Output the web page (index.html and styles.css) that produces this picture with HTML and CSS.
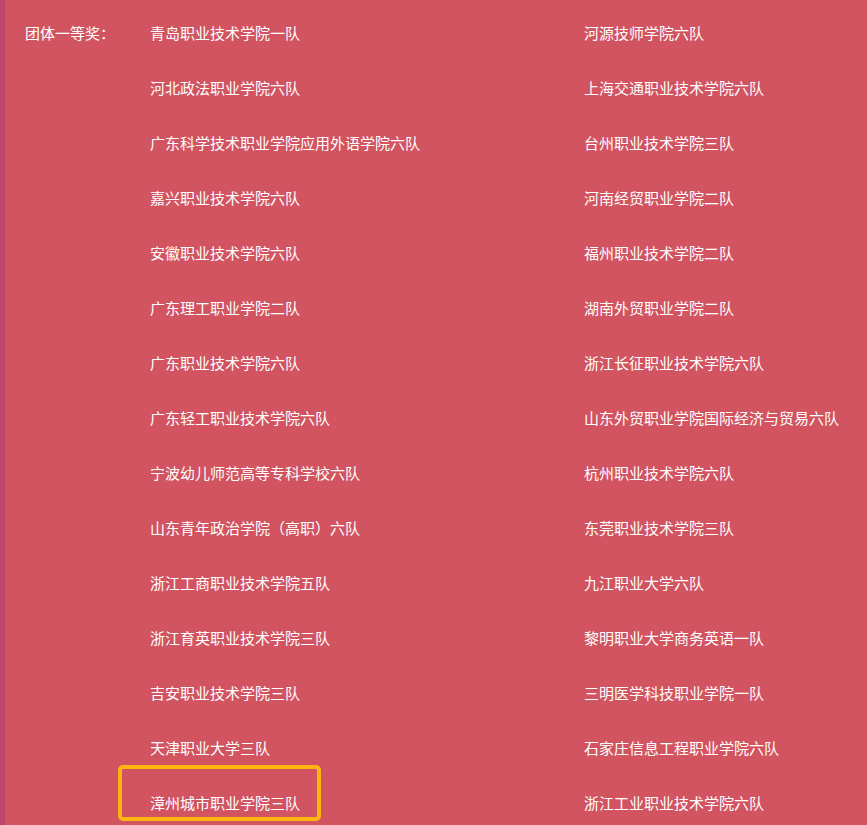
FILE: index.html
```html
<!DOCTYPE html>
<html lang="zh-CN">
<head>
<meta charset="utf-8">
<title>团体一等奖</title>
<link rel="stylesheet" href="styles.css">
</head>
<body>
<div class="page">
  <div class="strip"></div>
  <div class="awards">
    <div class="label">团体一等奖：</div>
    <div class="col">
      <div class="item">青岛职业技术学院一队</div>
      <div class="item">河北政法职业学院六队</div>
      <div class="item">广东科学技术职业学院应用外语学院六队</div>
      <div class="item">嘉兴职业技术学院六队</div>
      <div class="item">安徽职业技术学院六队</div>
      <div class="item">广东理工职业学院二队</div>
      <div class="item">广东职业技术学院六队</div>
      <div class="item">广东轻工职业技术学院六队</div>
      <div class="item">宁波幼儿师范高等专科学校六队</div>
      <div class="item">山东青年政治学院（高职）六队</div>
      <div class="item">浙江工商职业技术学院五队</div>
      <div class="item">浙江育英职业技术学院三队</div>
      <div class="item">吉安职业技术学院三队</div>
      <div class="item">天津职业大学三队</div>
      <div class="item highlighted">漳州城市职业学院三队<span class="mark"></span></div>
    </div>
    <div class="col">
      <div class="item">河源技师学院六队</div>
      <div class="item">上海交通职业技术学院六队</div>
      <div class="item">台州职业技术学院三队</div>
      <div class="item">河南经贸职业学院二队</div>
      <div class="item">福州职业技术学院二队</div>
      <div class="item">湖南外贸职业学院二队</div>
      <div class="item">浙江长征职业技术学院六队</div>
      <div class="item">山东外贸职业学院国际经济与贸易六队</div>
      <div class="item">杭州职业技术学院六队</div>
      <div class="item">东莞职业技术学院三队</div>
      <div class="item">九江职业大学六队</div>
      <div class="item">黎明职业大学商务英语一队</div>
      <div class="item">三明医学科技职业学院一队</div>
      <div class="item">石家庄信息工程职业学院六队</div>
      <div class="item">浙江工业职业技术学院六队</div>
    </div>
  </div>
</div>
</body>
</html>
```
FILE: styles.css
```css
html, body {
  margin: 0;
  padding: 0;
  height: 100%;
  overflow: hidden;
  background: #d25460;
}
.page {
  display: flex;
  min-height: 100%;
  font-family: "Noto Sans CJK SC", "Noto Sans", sans-serif;
  font-size: 15px;
  color: #ffffff;
}
.strip {
  width: 5px;
  flex: none;
  background: #bd4771;
}
.awards {
  flex: 1;
  display: grid;
  grid-template-columns: 125px 434px 1fr;
  padding: 5px 0 0 20px;
  align-content: start;
}
.label, .item {
  line-height: 55px;
  height: 55px;
  white-space: nowrap;
}
.highlighted {
  position: relative;
}
.mark {
  position: absolute;
  left: -32px;
  top: -10px;
  width: 203px;
  height: 56px;
  box-sizing: border-box;
  border: 4px solid #ffb50f;
  border-radius: 5px;
}
```
